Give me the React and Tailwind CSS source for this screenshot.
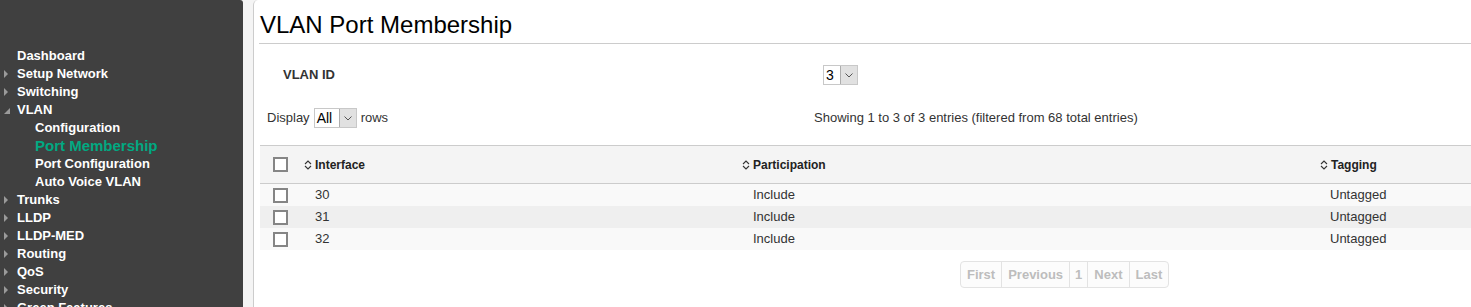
import React from "react";

const menu = [
  { label: "Dashboard" },
  { label: "Setup Network", arrow: "right" },
  { label: "Switching", arrow: "right" },
  { label: "VLAN", arrow: "open" },
  { label: "Configuration", sub: true },
  { label: "Port Membership", sub: true, active: true },
  { label: "Port Configuration", sub: true },
  { label: "Auto Voice VLAN", sub: true },
  { label: "Trunks", arrow: "right" },
  { label: "LLDP", arrow: "right" },
  { label: "LLDP-MED", arrow: "right" },
  { label: "Routing", arrow: "right" },
  { label: "QoS", arrow: "right" },
  { label: "Security", arrow: "right" },
  { label: "Green Features", arrow: "right" },
];

const rows = [
  { port: "30", part: "Include", tag: "Untagged", bg: "bg-[#f9f9f9]" },
  { port: "31", part: "Include", tag: "Untagged", bg: "bg-[#efefef]" },
  { port: "32", part: "Include", tag: "Untagged", bg: "bg-[#f9f9f9]" },
];

function Arrow({ type }) {
  if (type === "right") {
    return (
      <svg width="5" height="8" viewBox="0 0 5 8" className="ml-[4px]">
        <path d="M0 0 L4 4 L0 8 Z" fill="#9a9a9a" />
      </svg>
    );
  }
  if (type === "open") {
    return (
      <svg width="6" height="6" viewBox="0 0 6 6" className="ml-[4px] mt-[2px]">
        <path d="M6 0 L6 6 L0 6 Z" fill="#9a9a9a" />
      </svg>
    );
  }
  return null;
}

function SortIcon() {
  return (
    <svg width="8" height="10" viewBox="0 0 8 10" className="mr-[3px]">
      <path d="M1 4 L4 1 L7 4 M1 6 L4 9 L7 6" fill="none" stroke="#333" strokeWidth="1.1" />
    </svg>
  );
}

function Check() {
  return <div className="w-[15px] h-[15px] border-2 border-[#858585] bg-white" />;
}

function SelectBox({ value, w }) {
  return (
    <div className="flex h-[20px] border border-[#c8c8c8] bg-white">
      <div className={`${w} flex items-center pl-[2px] text-[14px] text-black`}>{value}</div>
      <div className="w-[17px] flex items-center justify-center bg-[#e1e1e1] border-l border-[#adadad]">
        <svg width="8" height="5" viewBox="0 0 8 5">
          <path d="M0.5 0.5 L4 4 L7.5 0.5" fill="none" stroke="#555" strokeWidth="1" />
        </svg>
      </div>
    </div>
  );
}

export default function App() {
  return (
    <div className="flex h-[307px] w-[1471px] overflow-hidden bg-[#f4f4f4] font-['Liberation_Sans',Arial,sans-serif]">
      {/* menu lateral */}
      <aside className="w-[243px] shrink-0 bg-[#404040] rounded-tr-[3px] pt-[47px]">
        {menu.map((m) => (
          <div key={m.label} className="flex items-center h-[18px]">
            {m.sub ? (
              <div className="w-[35px]" />
            ) : (
              <div className="w-[17px] flex items-center">
                <Arrow type={m.arrow} />
              </div>
            )}
            <span
              className={
                m.active
                  ? "text-[15px] font-bold text-[#01a982] leading-[18px]"
                  : "text-[13px] font-bold text-white leading-[18px]"
              }
            >
              {m.label}
            </span>
          </div>
        ))}
      </aside>

      <main className="ml-[10px] flex-1 bg-white border-l border-[#cccccc] rounded-tl-[5px]">
        <div className="ml-[5px] pl-[1px] pt-[11px] pb-[4px] border-b border-[#cccccc]">
          <h1 className="text-[24px] leading-[28px] text-black">VLAN Port Membership</h1>
        </div>

        <div className="flex items-center h-[20px] mt-[21px] pl-[29px]">
          <div className="w-[540px] text-[13px] font-bold text-[#333]">VLAN ID</div>
          <SelectBox value="3" w="w-[16px]" />
        </div>

        <div className="flex items-center h-[20px] mt-[23px] pl-[13px] text-[13px] text-[#333]">
          <div className="w-[547px] flex items-center">
            <span>Display</span>
            <div className="ml-[4px] mr-[4px]">
              <SelectBox value="All" w="w-[24px]" />
            </div>
            <span>rows</span>
          </div>
          <span>Showing 1 to 3 of 3 entries (filtered from 68 total entries)</span>
        </div>

        <div className="ml-[6px] mt-[17px]">
          <div className="flex items-center h-[39px] bg-[#f4f4f4] border-y border-[#cccccc] text-[12px] font-bold text-[#222]">
            <div className="w-[44px] pl-[13px]"><Check /></div>
            <div className="w-[438px] flex items-center"><SortIcon />Interface</div>
            <div className="w-[578px] flex items-center"><SortIcon />Participation</div>
            <div className="flex items-center"><SortIcon />Tagging</div>
          </div>
          {rows.map((r) => (
            <div key={r.port} className={`flex items-center h-[22px] ${r.bg} text-[13px] text-[#333]`}>
              <div className="w-[44px] pl-[13px]"><Check /></div>
              <div className="w-[438px] pl-[11px]">{r.port}</div>
              <div className="w-[578px] pl-[11px]">{r.part}</div>
              <div className="pl-[10px]">{r.tag}</div>
            </div>
          ))}
        </div>

        <div className="ml-[706px] mt-[11px] inline-flex h-[27px] border border-[#e3e3e3] rounded-[4px] bg-[#fcfcfc] text-[13px] font-bold text-[#bdbdbd]">
          {["First", "Previous", "1", "Next", "Last"].map((p, i) => (
            <div key={p} className={`flex items-center ${i === 2 ? "px-[5px]" : "px-[6px]"} ${i > 0 ? "border-l border-[#e3e3e3]" : ""}`}>
              {p}
            </div>
          ))}
        </div>
      </main>
    </div>
  );
}
